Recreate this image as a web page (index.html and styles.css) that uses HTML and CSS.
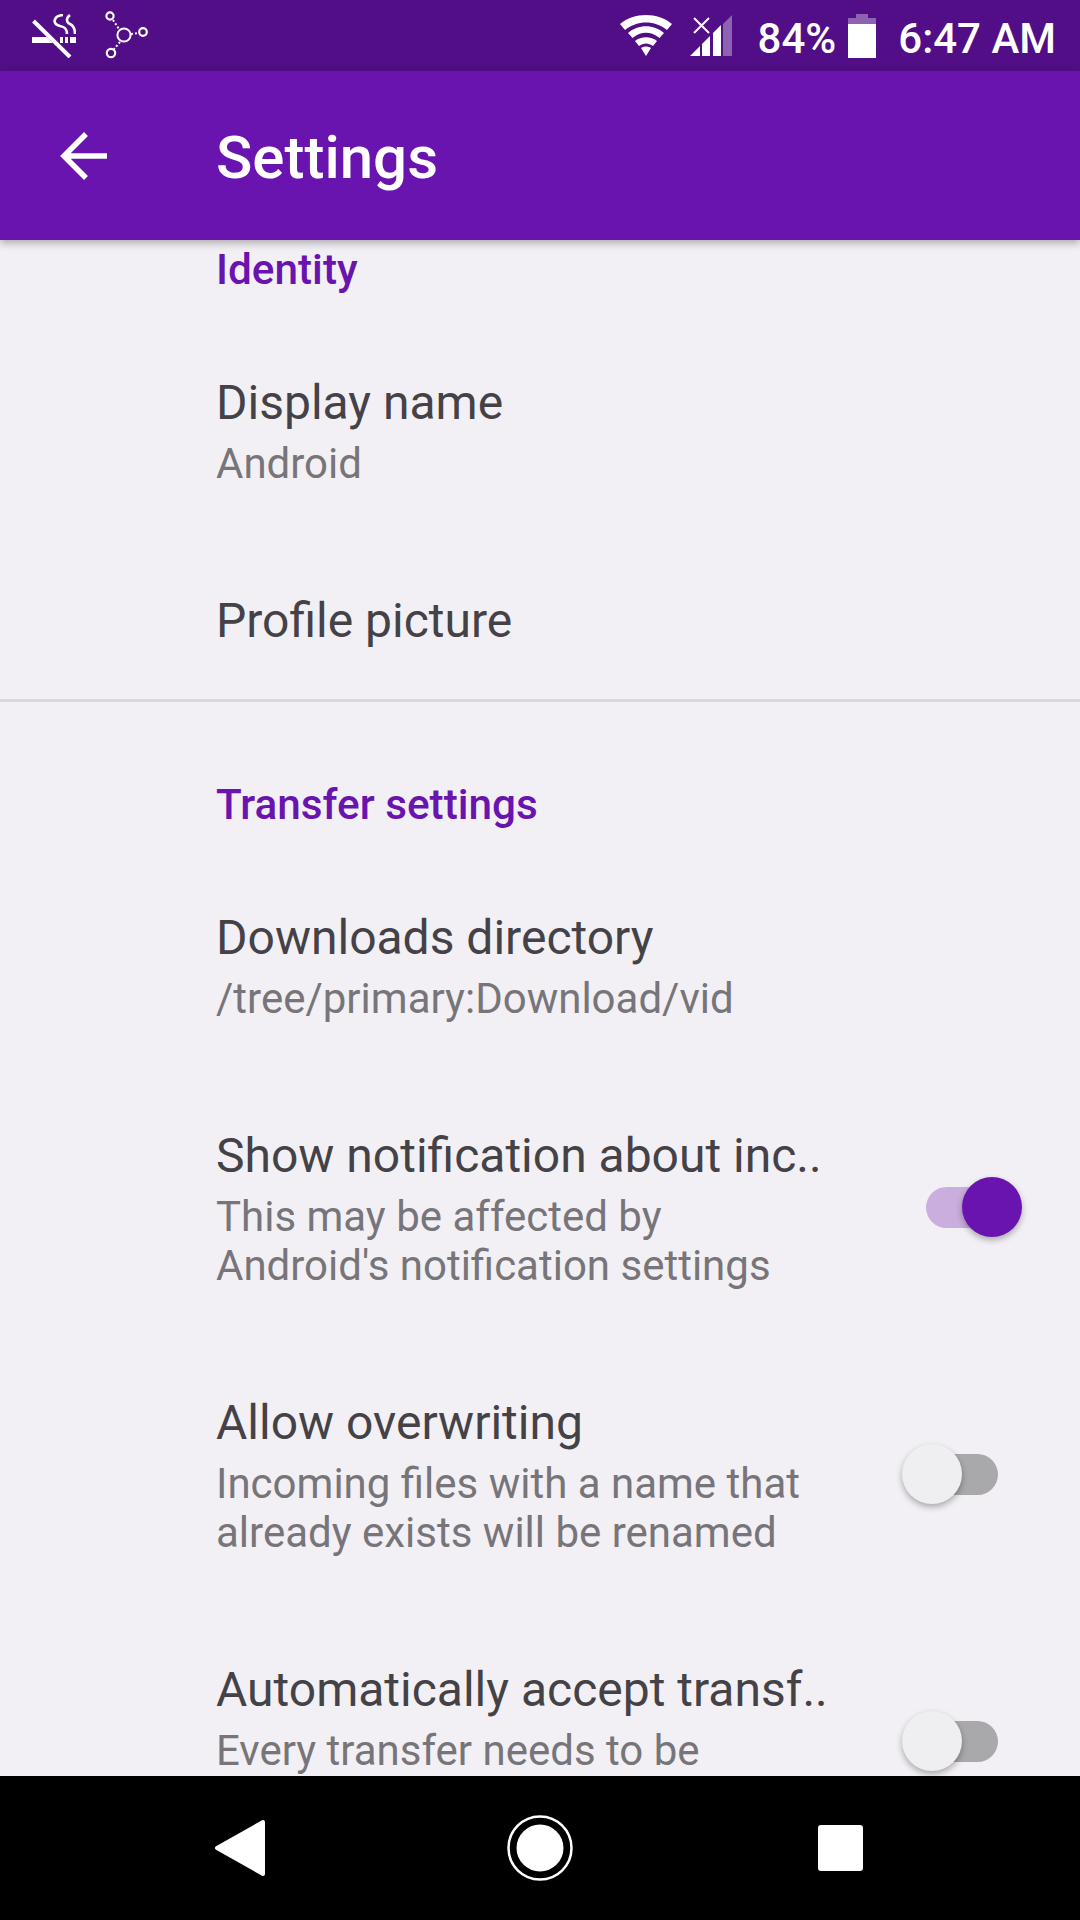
FILE: index.html
```html
<!DOCTYPE html>
<html lang="en">
<head>
  <meta charset="UTF-8" />
  <title>Settings</title>
  <link rel="stylesheet" href="styles.css">
</head>
<body>
  <div class="phone">
    <div class="status-bar">
      <div class="status-left">
        <svg class="ic-smoke" width="44" height="44" viewBox="0 0 44 44">
          <path d="M1.500 7 L38 43" stroke="#fff" stroke-width="4" fill="none"/>
          <path d="M0 23 H15 L21 29 H0 Z" fill="#fff"/>
          <path d="M28 23 H31 V29 H28 Z M33 23 H36 V29 H33 Z M38 23 H44 V29 H38 Z" fill="#fff"/>
          <path d="M31 1 C21 2 20 10 28 12 C33 13 35 15 35 20" stroke="#fff" stroke-width="2.600" fill="none"/>
          <path d="M38 1 C34 4 34 8 38 10 C42 12 43 15 43 20" stroke="#fff" stroke-width="2.600" fill="none"/>
        </svg>
        <svg class="ic-nodes" width="44" height="50" viewBox="0 0 44 50">
          <circle cx="19" cy="24" r="6.600" stroke="#fff" stroke-width="2" fill="none"/>
          <circle cx="5" cy="5" r="3.600" stroke="#fff" stroke-width="2.200" fill="none"/>
          <circle cx="38" cy="21" r="3.800" stroke="#fff" stroke-width="2.200" fill="none"/>
          <circle cx="6" cy="42" r="4.200" stroke="#fff" stroke-width="2.200" fill="none"/>
          <path d="M8 9 L14 18 M26 23 L33 22 M15 31 L9 38" stroke="#fff" stroke-width="2" stroke-dasharray="2 2" fill="none"/>
        </svg>
      </div>
      <div class="status-right">
        <svg class="ic-wifi" width="52" height="42" viewBox="0 0 52 42">
          <path d="M0 9 C14 -3 38 -3 52 9 L47 15 C35 5 17 5 5 15 Z" fill="#fff"/>
          <path d="M8 18 C18 9 34 9 44 18 L39.500 23 C31 16 21 16 12.500 23 Z" fill="#fff"/>
          <path d="M15 26 C21 21 31 21 37 26 L33 31 C28.500 27.500 23.500 27.500 19 31 Z" fill="#fff"/>
          <path d="M21 33 C24 31 28 31 31 33 L26 41 Z" fill="#fff"/>
        </svg>
        <svg class="ic-signal" width="42" height="42" viewBox="0 0 42 42">
          <path d="M33 41 V9 L42 0 V41 Z" fill="#fff" fill-opacity="0.35"/>
          <path d="M0 41 L10 31 V41 Z M12 41 V29 L20 21 V41 Z M23 41 V18 L31 10 V41 Z" fill="#fff"/>
          <path d="M4 3 L19 18 M19 3 L4 18" stroke="#fff" stroke-width="2" fill="none"/>
        </svg>
        <span class="status-text battery-pct">84%</span>
        <svg class="ic-battery" width="28" height="44" viewBox="0 0 28 44">
          <path d="M8 0 H20 V4 H28 V10 H0 V4 H8 Z" fill="#fff" fill-opacity="0.35"/>
          <rect x="0" y="10" width="28" height="34" fill="#fff"/>
        </svg>
        <span class="status-text clock">6:47 AM</span>
      </div>
    </div>

    <div class="app-bar">
      <svg class="ic-back" width="48" height="48" viewBox="0 0 48 48">
        <path d="M47 24 H4 M26 2 L4 24 L26 46" stroke="#fff" stroke-width="5.500" fill="none"/>
      </svg>
      <h1 class="app-title">Settings</h1>
    </div>

    <div class="content">
      <div class="section section-identity">
        <h2 class="section-title">Identity</h2>
        <div class="row">
          <div class="row-text">
            <div class="row-title">Display name</div>
            <div class="row-sub">Android</div>
          </div>
        </div>
        <div class="row row-single">
          <div class="row-text">
            <div class="row-title">Profile picture</div>
          </div>
        </div>
      </div>

      <div class="section section-transfer">
        <h2 class="section-title">Transfer settings</h2>
        <div class="row">
          <div class="row-text">
            <div class="row-title">Downloads directory</div>
            <div class="row-sub">/tree/primary:Download/vid</div>
          </div>
        </div>
        <div class="row">
          <div class="row-text">
            <div class="row-title">Show notification about inc..</div>
            <div class="row-sub">This may be affected by<br>Android's notification settings</div>
          </div>
          <div class="switch switch-on"><span class="thumb"></span></div>
        </div>
        <div class="row">
          <div class="row-text">
            <div class="row-title">Allow overwriting</div>
            <div class="row-sub">Incoming files with a name that<br>already exists will be renamed</div>
          </div>
          <div class="switch"><span class="thumb"></span></div>
        </div>
        <div class="row row-last">
          <div class="row-text">
            <div class="row-title">Automatically accept transf..</div>
            <div class="row-sub">Every transfer needs to be</div>
          </div>
          <div class="switch"><span class="thumb"></span></div>
        </div>
      </div>
    </div>

    <div class="nav-bar">
      <svg width="52" height="58" viewBox="0 0 52 58" class="nav-back">
        <path d="M49 3 V55 L3 29 Z" fill="#fff" stroke="#fff" stroke-width="4" stroke-linejoin="round"/>
      </svg>
      <svg width="66" height="66" viewBox="0 0 66 66" class="nav-home">
        <circle cx="33" cy="33" r="31.500" stroke="#fff" stroke-width="2.500" fill="none"/>
        <circle cx="33" cy="33" r="23.500" fill="#fff"/>
      </svg>
      <div class="nav-recent"></div>
    </div>
  </div>
</body>
</html>
```

FILE: styles.css
```css
* {
  box-sizing: border-box;
}
body {
  margin: 0;
  font-family: Roboto, sans-serif;
  background-color: #f2f0f4;
}
.phone {
  width: 1080px;
  height: 1920px;
  display: flex;
  flex-direction: column;
  overflow: hidden;
}

/* status bar */
.status-bar {
  height: 71px;
  background-color: #510e87;
  color: white;
  display: flex;
  justify-content: space-between;
  align-items: center;
  padding: 0 24px 0 32px;
  flex-shrink: 0;
}
.status-left {
  display: flex;
  align-items: center;
  gap: 29px;
}
.status-right {
  display: flex;
  align-items: center;
}
.status-text {
  font-size: 42px;
  font-weight: 500;
  padding-top: 6px;
}
.ic-wifi {
  margin-right: 18px;
}
.ic-signal {
  margin-right: 26px;
}
.battery-pct {
  margin-right: 12px;
}
.ic-battery {
  margin-right: 22px;
}

/* app bar */
.app-bar {
  height: 169px;
  background-color: #6a14b0;
  display: flex;
  align-items: center;
  padding-left: 60px;
  flex-shrink: 0;
  position: relative;
  z-index: 1;
  box-shadow: 0 3px 8px rgba(0, 0, 0, 0.3);
}
.app-title {
  margin: 3px 0 0 108px;
  color: white;
  font-size: 60px;
  font-weight: 500;
}

/* list */
.content {
  flex: 1;
  overflow: hidden;
}
.section-identity {
  padding: 8px 0 48px;
  border-bottom: 3px solid #dad8dc;
}
.section-transfer {
  padding-top: 81px;
}
.section-title {
  margin: 0 0 29px 216px;
  color: #6a14b0;
  font-size: 42.300px;
  line-height: 44px;
  font-weight: 500;
}
.row {
  display: flex;
  align-items: center;
  padding: 51px 0 51px 216px;
}
.row-single {
  padding-bottom: 0;
}
.row-last {
  align-items: flex-start;
}
.row-last .switch {
  margin-top: 62px;
}
.row-text {
  width: 710px;
}
.row-title {
  color: #444247;
  font-size: 48px;
  line-height: 61px;
}
.row-sub {
  color: #77757a;
  font-size: 42px;
  line-height: 49px;
  margin-top: 6px;
}

/* switches */
.switch {
  position: relative;
  width: 72px;
  height: 41px;
  border-radius: 21px;
  background-color: #a9a8ab;
}
.switch .thumb {
  position: absolute;
  left: -24px;
  top: -10px;
  width: 60px;
  height: 60px;
  border-radius: 50%;
  background-color: #efeef0;
  box-shadow: 0 3px 6px rgba(0, 0, 0, 0.3);
}
.switch-on {
  background-color: #c9aede;
}
.switch-on .thumb {
  left: 36px;
  background-color: #6a14b0;
}

/* nav bar */
.nav-bar {
  height: 144px;
  background-color: black;
  flex-shrink: 0;
  display: flex;
  align-items: center;
  padding-left: 214px;
}
.nav-home {
  margin-left: 241px;
}
.nav-recent {
  width: 45px;
  height: 46px;
  background-color: white;
  border-radius: 3px;
  margin-left: 245px;
}
```
